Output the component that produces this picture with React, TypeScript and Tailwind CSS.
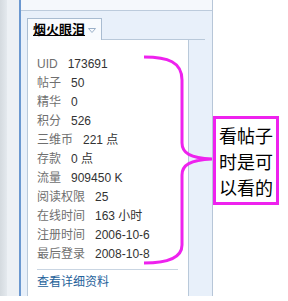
const rows: { label: string; value: string }[] = [
  { label: '帖子', value: '50' },
  { label: '精华', value: '0' },
  { label: '积分', value: '526' },
  { label: '三维币', value: '221 点' },
  { label: '存款', value: '0 点' },
  { label: '流量', value: '909450 K' },
  { label: '阅读权限', value: '25' },
  { label: '在线时间', value: '163 小时' },
  { label: '注册时间', value: '2006-10-6' },
  { label: '最后登录', value: '2008-10-8' },
];

export default function App() {
  return (
    <div className="relative w-[288px] h-[301px] bg-white overflow-hidden font-['Liberation_Sans','Noto_Sans_CJK_SC',sans-serif] text-[12px]">
      <div className="flex h-[296px]">
        {/* left edge of the page */}
        <div className="w-[7px] bg-gradient-to-r from-[#d4dadf] to-[#e4e9ee]" />
        <div className="w-[12px] bg-[#edf1f5]" />
        <div className="w-[2px] bg-[#6b98d0]" />

        {/* profile panel */}
        <div className="w-[192px] flex flex-col border-r border-[#b7c6d8] bg-[#e8f0fa]">
          <div className="h-[11px] bg-[#f5f8fc] border-b border-[#bccbdc]" />
          <div className="pt-[7px] pl-[6px] flex-1 flex flex-col">
            {/* tab */}
            <div className="flex w-[178px]">
              <div className="h-[22px] w-[75px] flex items-center gap-[3px] pl-[5px] border border-b-0 border-[#a9bcd1] bg-[#f8fbfe]">
                <span className="font-bold text-[13px] leading-none underline text-black">烟火眼泪</span>
                <svg width="8" height="5" viewBox="0 0 8 5" className="mt-[2px]">
                  <path d="M0.5 0.5 L4 4.5 L7.5 0.5 Z" fill="none" stroke="#9bb0c8" strokeWidth="1" />
                </svg>
              </div>
              <div className="flex-1 border-b border-[#b9c9da]" />
            </div>

            {/* details */}
            <div className="w-[162px] flex-1 bg-white border-l border-r border-[#b9c9da] pt-[15px] pl-[9px] pr-[10px]">
              <div className="flex gap-[10px] leading-[19px]">
                <span className="text-[#6f6f6f]">UID</span>
                <span className="text-[#333]">173691</span>
              </div>
              {rows.map((r) => (
                <div key={r.label} className="flex gap-[10px] leading-[19px] whitespace-nowrap">
                  <span className="text-[#6f6f6f]">{r.label}</span>
                  <span className="text-[#333]">{r.value}</span>
                </div>
              ))}
              <div className="mt-[5px] border-t border-[#c9d5e2]" />
              <div className="pt-[3px] leading-[19px] text-[#24619a]">查看详细资料</div>
            </div>
          </div>
        </div>
      </div>

      {/* annotation */}
      <svg className="absolute left-0 top-0" width="288" height="301" viewBox="0 0 288 301">
        <path
          d="M144 57 C168 57 182 62 182 80 L182 143 C182 153 190 158 212 159 C190 160 182 165 182 175 L182 245 C182 258 168 263 144 263"
          fill="none"
          stroke="#ee22ee"
          strokeWidth="3"
        />
      </svg>
      <div className="absolute left-[213px] top-[116px] w-[66px] h-[89px] border-[3px] border-[#ee22ee] bg-white flex flex-col items-center justify-center font-['Noto_Sans_CJK_SC',sans-serif] text-[18px] leading-[26px] text-black">
        <span>看帖子</span>
        <span>时是可</span>
        <span>以看的</span>
      </div>
    </div>
  );
}
